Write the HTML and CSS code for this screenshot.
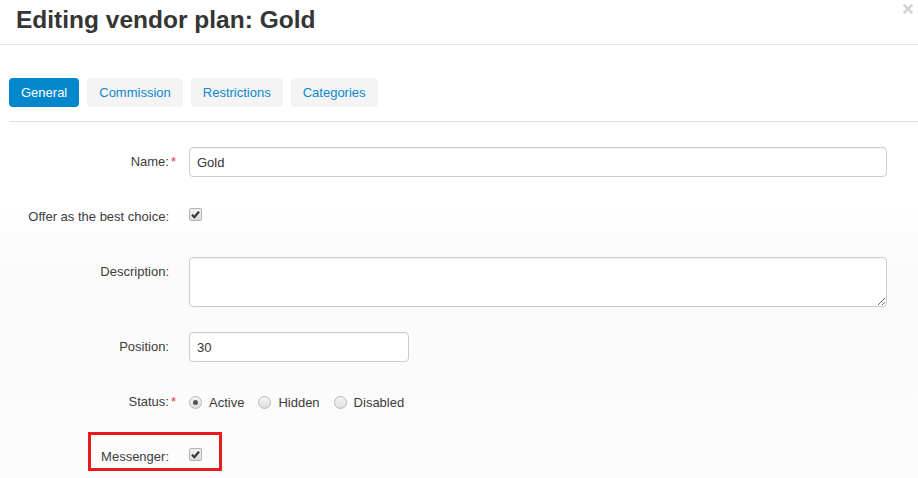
FILE: index.html
```html
<!DOCTYPE html>
<html lang="en">
<head>
<meta charset="utf-8">
<title>Editing vendor plan: Gold</title>
<link rel="stylesheet" href="styles.css">
</head>
<body>
<div class="dialog">
  <header class="dialog-header">
    <h1 class="dialog-title">Editing vendor plan: Gold</h1>
    <button class="close" type="button" aria-label="Close">
      <svg width="10" height="10" viewBox="0 0 10 10"><path d="M1.5 1.5 L8.5 8.5 M8.5 1.5 L1.5 8.5" stroke="#d4d4d4" stroke-width="2.6" stroke-linecap="square"/></svg>
    </button>
  </header>

  <nav class="tabs">
    <a class="tab active">General</a>
    <a class="tab">Commission</a>
    <a class="tab">Restrictions</a>
    <a class="tab">Categories</a>
  </nav>

  <form class="form">
    <div class="row">
      <label class="label required">Name:</label>
      <div class="control"><input class="input" type="text" value="Gold"></div>
    </div>
    <div class="row">
      <label class="label">Offer as the best choice:</label>
      <div class="control check-cell">
        <span class="checkbox"><svg width="11" height="11" viewBox="0 0 11 11"><path d="M2 5.8 L4.4 8.2 L9 2.6" fill="none" stroke="#333" stroke-width="2.2"/></svg></span>
      </div>
    </div>
    <div class="row">
      <label class="label">Description:</label>
      <div class="control"><textarea class="textarea"></textarea></div>
    </div>
    <div class="row">
      <label class="label">Position:</label>
      <div class="control"><input class="input input-short" type="text" value="30"></div>
    </div>
    <div class="row">
      <label class="label required">Status:</label>
      <div class="control radios">
        <span class="radio-item"><span class="radio checked"></span>Active</span>
        <span class="radio-item"><span class="radio"></span>Hidden</span>
        <span class="radio-item"><span class="radio"></span>Disabled</span>
      </div>
    </div>
    <div class="row row-highlight">
      <label class="label">Messenger:</label>
      <div class="control check-cell">
        <span class="checkbox"><svg width="11" height="11" viewBox="0 0 11 11"><path d="M2 5.8 L4.4 8.2 L9 2.6" fill="none" stroke="#333" stroke-width="2.2"/></svg></span>
      </div>
      <span class="highlight-box"></span>
    </div>
  </form>
</div>
</body>
</html>
```

FILE: styles.css
```css
* { box-sizing: border-box; }

html, body {
  margin: 0;
  height: 100%;
}

body {
  font-family: "Liberation Sans", Arial, sans-serif;
  font-size: 13px;
  color: #333;
  background: linear-gradient(to bottom, #ffffff 0, #ffffff 200px, #fafafa 280px, #fcfcfc 478px);
  overflow: hidden;
}

.dialog {
  width: 918px;
}

.dialog-header {
  position: relative;
  height: 45px;
  padding: 5px 16px 0;
  border-bottom: 1px solid #e6e6e6;
}

.dialog-title {
  margin: 0;
  font-size: 24.5px;
  line-height: 30px;
  font-weight: bold;
  color: #353535;
}

.close {
  position: absolute;
  top: 4px;
  right: 5px;
  padding: 0;
  border: 0;
  background: none;
  width: 10px;
  height: 10px;
  display: flex;
}

.tabs {
  display: flex;
  gap: 8px;
  margin: 33px 0 0 9px;
  padding-bottom: 14px;
  border-bottom: 1px solid #dedede;
}

.tab {
  display: block;
  padding: 7px 12px;
  line-height: 15px;
  border-radius: 4px;
  background: #f4f4f4;
  color: #0b88cc;
}

.tab.active {
  background: #0388cc;
  color: #fff;
}

.form {
  padding: 25px 31px 0 0;
}

.row {
  display: grid;
  grid-template-columns: 169px 1fr;
  column-gap: 20px;
  min-height: 30px;
  margin-bottom: 25px;
}

.label {
  text-align: right;
  line-height: 30px;
  color: #3c3c3c;
}

.label.required::after {
  content: "*";
  display: inline-block;
  color: #ee3333;
  padding-left: 2px;
  margin-right: -7px;
}

.input {
  display: block;
  width: 100%;
  height: 30px;
  padding: 0 7px;
  border: 1px solid #cccccc;
  border-radius: 4px;
  background: #fff;
  font-family: inherit;
  font-size: 13px;
  color: #333;
  box-shadow: inset 0 1px 1px rgba(0,0,0,0.04);
}

.input-short {
  width: 220px;
}

.textarea {
  display: block;
  width: 100%;
  height: 50px;
  padding: 5px 7px;
  border: 1px solid #cccccc;
  border-radius: 4px;
  background: #fff;
  font-family: inherit;
  font-size: 13px;
  box-shadow: inset 0 1px 1px rgba(0,0,0,0.04);
}

.check-cell {
  padding-top: 6px;
}

.checkbox {
  display: flex;
  align-items: center;
  justify-content: center;
  width: 13px;
  height: 13px;
  border: 1px solid #b4b4b4;
  border-radius: 2px;
  background: linear-gradient(#f0f0f0, #dcdcdc);
}

.radios {
  display: flex;
  align-items: center;
  gap: 14px;
  height: 30px;
}

.radio-item {
  display: flex;
  align-items: center;
  color: #3c3c3c;
}

.radio {
  display: flex;
  align-items: center;
  justify-content: center;
  width: 13px;
  height: 13px;
  margin-right: 7px;
  border: 1px solid #b8b8b8;
  border-radius: 50%;
  background: linear-gradient(#f6f6f6, #dedede);
}

.radio.checked::after {
  content: "";
  width: 5px;
  height: 5px;
  border-radius: 50%;
  background: #555;
}

.row-highlight {
  position: relative;
}

.highlight-box {
  position: absolute;
  left: 88px;
  top: -10px;
  width: 134px;
  height: 39px;
  border: 3px solid #e81c1f;
  pointer-events: none;
}
```
